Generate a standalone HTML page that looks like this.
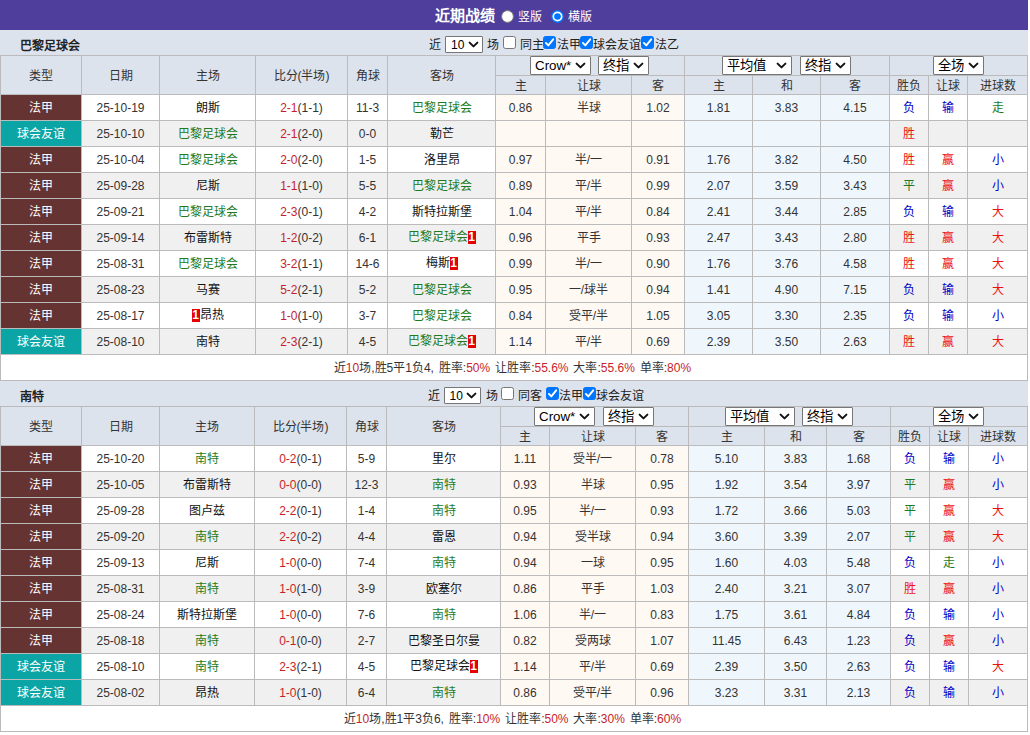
<!DOCTYPE html>
<html lang="zh-CN"><head><meta charset="utf-8"><title>近期战绩</title><style>
*{box-sizing:border-box;margin:0;padding:0}
html,body{width:1030px;height:735px;background:#fff;overflow:hidden}
body{font-family:"Liberation Sans",sans-serif;font-size:12px;color:#333;line-height:1}
#wrap{width:1028px;position:relative}
.title{height:30px;background:#4f3e9c;color:#fff;text-align:center;position:relative}
.title b{position:absolute;left:435px;top:8px;font-size:15px;font-weight:bold;letter-spacing:0}
.title .lb{position:absolute;top:11px;font-size:12px}
.rad{position:absolute;width:13px;height:13px}
.team{height:25px;background:#dde3ed;position:relative}
.team .nm{position:absolute;left:19.5px;top:10px;font-weight:bold;font-size:12px;color:#222}
.team .t{position:absolute;top:9px;font-size:12px;color:#222}
.cb{position:absolute;width:13px;height:13px;border:1px solid #767676;border-radius:2.5px;background:#fff}
.cb.on{background:#0075ff;border-color:#0075ff}
.cb.on svg{position:absolute;left:0;top:0}
.sel{display:inline-block;position:relative;height:19px;border:1px solid #767676;border-radius:1px;background:#fff;font-size:13.33px;color:#000;text-align:left;padding:1px 0 0 4px;vertical-align:top;line-height:15px;white-space:nowrap}
.sel svg{position:absolute;right:4px;top:5px}
.team .sel{position:absolute;top:6px;height:17px;font-size:12px;line-height:13px;padding:2px 0 0 5px}
.team .sel svg{top:4px;right:3px}
table{border-collapse:separate;border-spacing:0;table-layout:fixed;width:1028px;border-left:1px solid #bbb;border-top:1px solid #bbb}
td,th{border-right:1px solid #bbb;border-bottom:1px solid #bbb;text-align:center;vertical-align:middle;font-weight:normal;overflow:hidden;white-space:nowrap;padding:0}
thead th{background:#dde3ed;color:#333;padding-top:2px}
thead tr.h1 th[colspan]{padding-top:0;position:relative}
thead .sel{position:absolute;top:0}
thead tr.h1 th{height:20px;font-size:0}
thead tr.h1 th[rowspan]{font-size:12px}
thead tr.h2 th{height:19px}
tbody td{height:26px;background:#fff}
tbody tr.e td{background:#f0f0f0}
tbody td.p{background:#fff9f4}
tbody td.b{background:#eff7fd}
tbody tr.e td.p{background:#fff9f4}
tbody tr.e td.b{background:#eff7fd}
tbody td.l1,tbody tr.e td.l1{background:#663333;color:#fff}
tbody td.l2,tbody tr.e td.l2{background:#0ca5a5;color:#fff}
.k{color:#111}.g{color:#1e7a1e}.r{color:#c81e28}.rr{color:#ee1111}.u{color:#0000c8}
.rc{display:inline-block;background:#e60000;color:#fff;font-weight:bold;font-size:12px;line-height:13px;height:13px;width:8px;text-align:center;vertical-align:baseline}
.sum{height:26px;border:1px solid #bbb;border-top:0;background:#fff;text-align:center;line-height:26px;font-size:12px;width:1028px;word-spacing:1.6px;overflow:hidden;padding-right:3px}
</style></head><body><div id="wrap"><div class="title"><b>近期战绩</b><svg class="rad" style="left:501px;top:10px" viewBox="0 0 13 13"><circle cx="6.5" cy="6.5" r="5.9" fill="#fff" stroke="#767676" stroke-width="1"/></svg><span class="lb" style="left:518px">竖版</span><svg class="rad" style="left:551px;top:10px" viewBox="0 0 13 13"><circle cx="6.5" cy="6.5" r="5.7" fill="#fff" stroke="#0075ff" stroke-width="1.4"/><circle cx="6.5" cy="6.5" r="3.3" fill="#0075ff"/></svg><span class="lb" style="left:568px">横版</span></div><div class="team" style="height:25px"><span class="nm">巴黎足球会</span><span class="t" style="left:429px">近</span><span class="sel" style="left:445px;width:38px">10<svg width="11" height="8" viewBox="0 0 11 8"><path d="M1.6 1.6 L5.5 5.4 L9.4 1.6" fill="none" stroke="#111" stroke-width="2" stroke-linecap="round" stroke-linejoin="round"/></svg></span><span class="t" style="left:487px">场</span><span class="cb" style="left:503px;top:6px"></span><span class="t" style="left:520px">同主</span><span class="cb on" style="left:543px;top:6px"><svg width="13" height="13" viewBox="0 0 13 13" style="left:-1px;top:-1px"><path d="M2.9 6.9 L5.3 9.4 L10.2 3.3" fill="none" stroke="#fff" stroke-width="1.9" stroke-linecap="round" stroke-linejoin="round"/></svg></span><span class="t" style="left:556.5px">法甲</span><span class="cb on" style="left:580px;top:6px"><svg width="13" height="13" viewBox="0 0 13 13" style="left:-1px;top:-1px"><path d="M2.9 6.9 L5.3 9.4 L10.2 3.3" fill="none" stroke="#fff" stroke-width="1.9" stroke-linecap="round" stroke-linejoin="round"/></svg></span><span class="t" style="left:593px">球会友谊</span><span class="cb on" style="left:641px;top:6px"><svg width="13" height="13" viewBox="0 0 13 13" style="left:-1px;top:-1px"><path d="M2.9 6.9 L5.3 9.4 L10.2 3.3" fill="none" stroke="#fff" stroke-width="1.9" stroke-linecap="round" stroke-linejoin="round"/></svg></span><span class="t" style="left:654.5px">法乙</span></div><table><colgroup><col style="width:81px"><col style="width:78px"><col style="width:96px"><col style="width:92px"><col style="width:40px"><col style="width:108px"><col style="width:50px"><col style="width:86px"><col style="width:53px"><col style="width:68px"><col style="width:68px"><col style="width:69px"><col style="width:39px"><col style="width:39px"><col style="width:60px"></colgroup><thead><tr class="h1"><th rowspan="2">类型</th><th rowspan="2">日期</th><th rowspan="2">主场</th><th rowspan="2">比分(半场)</th><th rowspan="2">角球</th><th rowspan="2">客场</th><th colspan="3"><span class="sel" style="left:34px;width:61px">Crow*<svg width="11" height="8" viewBox="0 0 11 8"><path d="M1.6 1.6 L5.5 5.4 L9.4 1.6" fill="none" stroke="#111" stroke-width="2" stroke-linecap="round" stroke-linejoin="round"/></svg></span><span class="sel" style="left:102px;width:51px">终指<svg width="11" height="8" viewBox="0 0 11 8"><path d="M1.6 1.6 L5.5 5.4 L9.4 1.6" fill="none" stroke="#111" stroke-width="2" stroke-linecap="round" stroke-linejoin="round"/></svg></span></th><th colspan="3"><span class="sel" style="left:37px;width:70px">平均值<svg width="11" height="8" viewBox="0 0 11 8"><path d="M1.6 1.6 L5.5 5.4 L9.4 1.6" fill="none" stroke="#111" stroke-width="2" stroke-linecap="round" stroke-linejoin="round"/></svg></span><span class="sel" style="left:115px;width:51px">终指<svg width="11" height="8" viewBox="0 0 11 8"><path d="M1.6 1.6 L5.5 5.4 L9.4 1.6" fill="none" stroke="#111" stroke-width="2" stroke-linecap="round" stroke-linejoin="round"/></svg></span></th><th colspan="3"><span class="sel" style="left:43px;width:51px">全场<svg width="11" height="8" viewBox="0 0 11 8"><path d="M1.6 1.6 L5.5 5.4 L9.4 1.6" fill="none" stroke="#111" stroke-width="2" stroke-linecap="round" stroke-linejoin="round"/></svg></span></th></tr><tr class="h2"><th>主</th><th>让球</th><th>客</th><th>主</th><th>和</th><th>客</th><th>胜负</th><th>让球</th><th>进球数</th></tr></thead><tbody><tr><td class="l1">法甲</td><td>25-10-19</td><td class="k">朗斯</td><td><span class="r">2-1</span>(1-1)</td><td>11-3</td><td class="g">巴黎足球会</td><td class="p">0.86</td><td class="p">半球</td><td class="p">1.02</td><td class="b">1.81</td><td class="b">3.83</td><td class="b">4.15</td><td class="u">负</td><td class="u">输</td><td class="g">走</td></tr><tr class="e"><td class="l2">球会友谊</td><td>25-10-10</td><td class="g">巴黎足球会</td><td><span class="r">2-1</span>(2-0)</td><td>0-0</td><td class="k">勒芒</td><td class="p"></td><td class="p"></td><td class="p"></td><td class="b"></td><td class="b"></td><td class="b"></td><td class="rr">胜</td><td class=""></td><td class=""></td></tr><tr><td class="l1">法甲</td><td>25-10-04</td><td class="g">巴黎足球会</td><td><span class="r">2-0</span>(2-0)</td><td>1-5</td><td class="k">洛里昂</td><td class="p">0.97</td><td class="p">半/一</td><td class="p">0.91</td><td class="b">1.76</td><td class="b">3.82</td><td class="b">4.50</td><td class="rr">胜</td><td class="rr">赢</td><td class="u">小</td></tr><tr class="e"><td class="l1">法甲</td><td>25-09-28</td><td class="k">尼斯</td><td><span class="r">1-1</span>(1-0)</td><td>5-5</td><td class="g">巴黎足球会</td><td class="p">0.89</td><td class="p">平/半</td><td class="p">0.99</td><td class="b">2.07</td><td class="b">3.59</td><td class="b">3.43</td><td class="g">平</td><td class="rr">赢</td><td class="u">小</td></tr><tr><td class="l1">法甲</td><td>25-09-21</td><td class="g">巴黎足球会</td><td><span class="r">2-3</span>(0-1)</td><td>4-2</td><td class="k">斯特拉斯堡</td><td class="p">1.04</td><td class="p">平/半</td><td class="p">0.84</td><td class="b">2.41</td><td class="b">3.44</td><td class="b">2.85</td><td class="u">负</td><td class="u">输</td><td class="rr">大</td></tr><tr class="e"><td class="l1">法甲</td><td>25-09-14</td><td class="k">布雷斯特</td><td><span class="r">1-2</span>(0-2)</td><td>6-1</td><td class="g">巴黎足球会<span class="rc">1</span></td><td class="p">0.96</td><td class="p">平手</td><td class="p">0.93</td><td class="b">2.47</td><td class="b">3.43</td><td class="b">2.80</td><td class="rr">胜</td><td class="rr">赢</td><td class="rr">大</td></tr><tr><td class="l1">法甲</td><td>25-08-31</td><td class="g">巴黎足球会</td><td><span class="r">3-2</span>(1-1)</td><td>14-6</td><td class="k">梅斯<span class="rc">1</span></td><td class="p">0.99</td><td class="p">半/一</td><td class="p">0.90</td><td class="b">1.76</td><td class="b">3.76</td><td class="b">4.58</td><td class="rr">胜</td><td class="rr">赢</td><td class="rr">大</td></tr><tr class="e"><td class="l1">法甲</td><td>25-08-23</td><td class="k">马赛</td><td><span class="r">5-2</span>(2-1)</td><td>5-2</td><td class="g">巴黎足球会</td><td class="p">0.95</td><td class="p">一/球半</td><td class="p">0.94</td><td class="b">1.41</td><td class="b">4.90</td><td class="b">7.15</td><td class="u">负</td><td class="u">输</td><td class="rr">大</td></tr><tr><td class="l1">法甲</td><td>25-08-17</td><td class="k"><span class="rc">1</span>昂热</td><td><span class="r">1-0</span>(1-0)</td><td>3-7</td><td class="g">巴黎足球会</td><td class="p">0.84</td><td class="p">受平/半</td><td class="p">1.05</td><td class="b">3.05</td><td class="b">3.30</td><td class="b">2.35</td><td class="u">负</td><td class="u">输</td><td class="u">小</td></tr><tr class="e"><td class="l2">球会友谊</td><td>25-08-10</td><td class="k">南特</td><td><span class="r">2-3</span>(2-1)</td><td>4-5</td><td class="g">巴黎足球会<span class="rc">1</span></td><td class="p">1.14</td><td class="p">平/半</td><td class="p">0.69</td><td class="b">2.39</td><td class="b">3.50</td><td class="b">2.63</td><td class="rr">胜</td><td class="rr">赢</td><td class="rr">大</td></tr></tbody></table><div class="sum">近<span class="r">10</span>场,胜5平1负4, 胜率:<span class="r">50%</span> 让胜率:<span class="r">55.6%</span> 大率:<span class="r">55.6%</span> 单率:<span class="r">80%</span></div><div class="team" style="height:25px"><span class="nm">南特</span><span class="t" style="left:427.5px">近</span><span class="sel" style="left:443.5px;width:37.5px">10<svg width="11" height="8" viewBox="0 0 11 8"><path d="M1.6 1.6 L5.5 5.4 L9.4 1.6" fill="none" stroke="#111" stroke-width="2" stroke-linecap="round" stroke-linejoin="round"/></svg></span><span class="t" style="left:485.5px">场</span><span class="cb" style="left:501px;top:6px"></span><span class="t" style="left:518px">同客</span><span class="cb on" style="left:546px;top:6px"><svg width="13" height="13" viewBox="0 0 13 13" style="left:-1px;top:-1px"><path d="M2.9 6.9 L5.3 9.4 L10.2 3.3" fill="none" stroke="#fff" stroke-width="1.9" stroke-linecap="round" stroke-linejoin="round"/></svg></span><span class="t" style="left:559px">法甲</span><span class="cb on" style="left:583px;top:6px"><svg width="13" height="13" viewBox="0 0 13 13" style="left:-1px;top:-1px"><path d="M2.9 6.9 L5.3 9.4 L10.2 3.3" fill="none" stroke="#fff" stroke-width="1.9" stroke-linecap="round" stroke-linejoin="round"/></svg></span><span class="t" style="left:596px">球会友谊</span></div><table><colgroup><col style="width:81px"><col style="width:78px"><col style="width:95px"><col style="width:92px"><col style="width:40px"><col style="width:114px"><col style="width:49px"><col style="width:86px"><col style="width:53px"><col style="width:76px"><col style="width:62px"><col style="width:64px"><col style="width:39px"><col style="width:39px"><col style="width:59px"></colgroup><thead><tr class="h1"><th rowspan="2">类型</th><th rowspan="2">日期</th><th rowspan="2">主场</th><th rowspan="2">比分(半场)</th><th rowspan="2">角球</th><th rowspan="2">客场</th><th colspan="3"><span class="sel" style="left:33px;width:61px">Crow*<svg width="11" height="8" viewBox="0 0 11 8"><path d="M1.6 1.6 L5.5 5.4 L9.4 1.6" fill="none" stroke="#111" stroke-width="2" stroke-linecap="round" stroke-linejoin="round"/></svg></span><span class="sel" style="left:102px;width:51px">终指<svg width="11" height="8" viewBox="0 0 11 8"><path d="M1.6 1.6 L5.5 5.4 L9.4 1.6" fill="none" stroke="#111" stroke-width="2" stroke-linecap="round" stroke-linejoin="round"/></svg></span></th><th colspan="3"><span class="sel" style="left:36px;width:70px">平均值<svg width="11" height="8" viewBox="0 0 11 8"><path d="M1.6 1.6 L5.5 5.4 L9.4 1.6" fill="none" stroke="#111" stroke-width="2" stroke-linecap="round" stroke-linejoin="round"/></svg></span><span class="sel" style="left:113px;width:51px">终指<svg width="11" height="8" viewBox="0 0 11 8"><path d="M1.6 1.6 L5.5 5.4 L9.4 1.6" fill="none" stroke="#111" stroke-width="2" stroke-linecap="round" stroke-linejoin="round"/></svg></span></th><th colspan="3"><span class="sel" style="left:42px;width:51px">全场<svg width="11" height="8" viewBox="0 0 11 8"><path d="M1.6 1.6 L5.5 5.4 L9.4 1.6" fill="none" stroke="#111" stroke-width="2" stroke-linecap="round" stroke-linejoin="round"/></svg></span></th></tr><tr class="h2"><th>主</th><th>让球</th><th>客</th><th>主</th><th>和</th><th>客</th><th>胜负</th><th>让球</th><th>进球数</th></tr></thead><tbody><tr><td class="l1">法甲</td><td>25-10-20</td><td class="g">南特</td><td><span class="r">0-2</span>(0-1)</td><td>5-9</td><td class="k">里尔</td><td class="p">1.11</td><td class="p">受半/一</td><td class="p">0.78</td><td class="b">5.10</td><td class="b">3.83</td><td class="b">1.68</td><td class="u">负</td><td class="u">输</td><td class="u">小</td></tr><tr class="e"><td class="l1">法甲</td><td>25-10-05</td><td class="k">布雷斯特</td><td><span class="r">0-0</span>(0-0)</td><td>12-3</td><td class="g">南特</td><td class="p">0.93</td><td class="p">半球</td><td class="p">0.95</td><td class="b">1.92</td><td class="b">3.54</td><td class="b">3.97</td><td class="g">平</td><td class="rr">赢</td><td class="u">小</td></tr><tr><td class="l1">法甲</td><td>25-09-28</td><td class="k">图卢兹</td><td><span class="r">2-2</span>(0-1)</td><td>1-4</td><td class="g">南特</td><td class="p">0.95</td><td class="p">半/一</td><td class="p">0.93</td><td class="b">1.72</td><td class="b">3.66</td><td class="b">5.03</td><td class="g">平</td><td class="rr">赢</td><td class="rr">大</td></tr><tr class="e"><td class="l1">法甲</td><td>25-09-20</td><td class="g">南特</td><td><span class="r">2-2</span>(0-2)</td><td>4-4</td><td class="k">雷恩</td><td class="p">0.94</td><td class="p">受半球</td><td class="p">0.94</td><td class="b">3.60</td><td class="b">3.39</td><td class="b">2.07</td><td class="g">平</td><td class="rr">赢</td><td class="rr">大</td></tr><tr><td class="l1">法甲</td><td>25-09-13</td><td class="k">尼斯</td><td><span class="r">1-0</span>(0-0)</td><td>7-4</td><td class="g">南特</td><td class="p">0.94</td><td class="p">一球</td><td class="p">0.95</td><td class="b">1.60</td><td class="b">4.03</td><td class="b">5.48</td><td class="u">负</td><td class="g">走</td><td class="u">小</td></tr><tr class="e"><td class="l1">法甲</td><td>25-08-31</td><td class="g">南特</td><td><span class="r">1-0</span>(1-0)</td><td>3-9</td><td class="k">欧塞尔</td><td class="p">0.86</td><td class="p">平手</td><td class="p">1.03</td><td class="b">2.40</td><td class="b">3.21</td><td class="b">3.07</td><td class="rr">胜</td><td class="rr">赢</td><td class="u">小</td></tr><tr><td class="l1">法甲</td><td>25-08-24</td><td class="k">斯特拉斯堡</td><td><span class="r">1-0</span>(0-0)</td><td>7-6</td><td class="g">南特</td><td class="p">1.06</td><td class="p">半/一</td><td class="p">0.83</td><td class="b">1.75</td><td class="b">3.61</td><td class="b">4.84</td><td class="u">负</td><td class="u">输</td><td class="u">小</td></tr><tr class="e"><td class="l1">法甲</td><td>25-08-18</td><td class="g">南特</td><td><span class="r">0-1</span>(0-0)</td><td>2-7</td><td class="k">巴黎圣日尔曼</td><td class="p">0.82</td><td class="p">受两球</td><td class="p">1.07</td><td class="b">11.45</td><td class="b">6.43</td><td class="b">1.23</td><td class="u">负</td><td class="rr">赢</td><td class="u">小</td></tr><tr><td class="l2">球会友谊</td><td>25-08-10</td><td class="g">南特</td><td><span class="r">2-3</span>(2-1)</td><td>4-5</td><td class="k">巴黎足球会<span class="rc">1</span></td><td class="p">1.14</td><td class="p">平/半</td><td class="p">0.69</td><td class="b">2.39</td><td class="b">3.50</td><td class="b">2.63</td><td class="u">负</td><td class="u">输</td><td class="rr">大</td></tr><tr class="e"><td class="l2">球会友谊</td><td>25-08-02</td><td class="k">昂热</td><td><span class="r">1-0</span>(1-0)</td><td>6-4</td><td class="g">南特</td><td class="p">0.86</td><td class="p">受平/半</td><td class="p">0.96</td><td class="b">3.23</td><td class="b">3.31</td><td class="b">2.13</td><td class="u">负</td><td class="u">输</td><td class="u">小</td></tr></tbody></table><div class="sum">近<span class="r">10</span>场,胜1平3负6, 胜率:<span class="r">10%</span> 让胜率:<span class="r">50%</span> 大率:<span class="r">30%</span> 单率:<span class="r">60%</span></div></div></body></html>
